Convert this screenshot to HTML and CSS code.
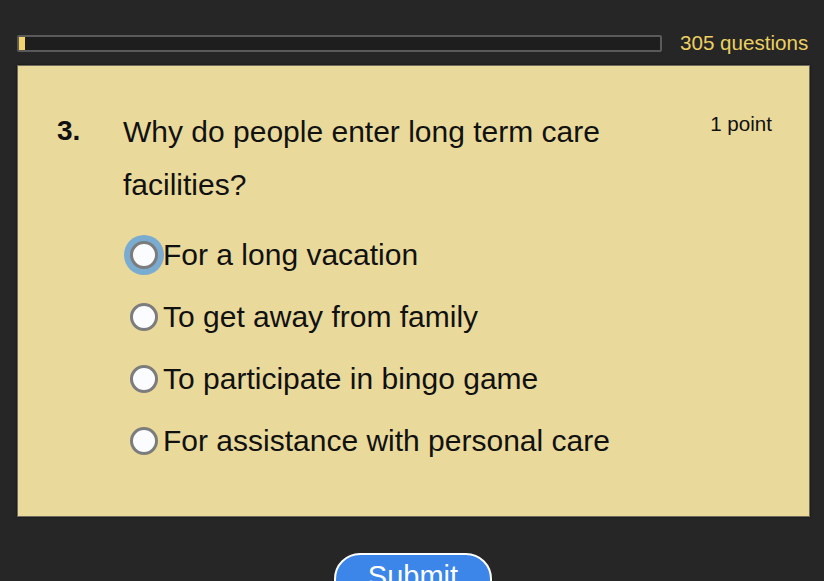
FILE: index.html
```html
<!DOCTYPE html>
<html>
<head>
    <title>Quiz</title>
    <link rel="stylesheet" href="styles.css">
</head>
<body>

    <div class="progress-row">
        <div class="progress-bar">
            <div class="progress-fill" style="width: 1%;"></div>
        </div>
        <span class="question-count">305 questions</span>
    </div>

    <div class="question-card">
        <div class="question-head">
            <div class="question-number">3.</div>
            <div class="question-text">Why do people enter long term care facilities?</div>
            <div class="question-points">1 point</div>
        </div>

        <div class="answers">
            <label class="answer">
                <input type="radio" name="q3" class="focused">
                <span>For a long vacation</span>
            </label>
            <label class="answer">
                <input type="radio" name="q3">
                <span>To get away from family</span>
            </label>
            <label class="answer">
                <input type="radio" name="q3">
                <span>To participate in bingo game</span>
            </label>
            <label class="answer">
                <input type="radio" name="q3">
                <span>For assistance with personal care</span>
            </label>
        </div>
    </div>

    <div class="submit-row">
        <button class="submit-btn">Submit</button>
    </div>

</body>
</html>
```

FILE: styles.css
```css
body {
    margin: 0;
    background-color: #262626;
    font-family: "Liberation Sans", Arial, sans-serif;
    overflow: hidden;
    height: 581px;
}

.progress-row {
    display: flex;
    align-items: center;
    padding: 32px 0 0 17px;
    height: 22px;
}

.progress-bar {
    flex-shrink: 0;
    width: 641px;
    height: 13px;
    border: 2px solid #5a5a5a;
    border-radius: 2px;
    background-color: #1e1e1e;
}

.progress-fill {
    min-width: 5px;
    height: 100%;
    background-color: #f2d46a;
}

.question-count {
    margin-left: 18px;
    white-space: nowrap;
    color: #ecd062;
    font-size: 20.6px;
}

.question-card {
    margin: 11px 14px 0 17px;
    height: 452px;
    box-sizing: border-box;
    background-color: #e9d99b;
    border: 1px solid #6e6a5c;
    box-shadow: 0 0 2px #111;
    padding: 43px 37px 0 39px;
}

.question-head {
    display: flex;
    align-items: flex-start;
}

.question-number {
    width: 66px;
    font-size: 28px;
    font-weight: bold;
    line-height: 44px;
    color: #111;
}

.question-text {
    width: 540px;
    font-size: 30px;
    line-height: 53px;
    margin-top: -4px;
    color: #111;
}

.question-points {
    margin-left: auto;
    font-size: 20.6px;
    line-height: 30px;
    color: #111;
}

.answers {
    display: flex;
    flex-direction: column;
    gap: 22px;
    margin-top: 24px;
    padding-left: 73px;
}

.answer {
    display: flex;
    align-items: center;
    height: 40px;
    font-size: 30px;
    color: #111;
}

.answer input {
    appearance: none;
    width: 28px;
    height: 28px;
    margin: 0 5px 0 0;
    border: 3px solid #7c7c7c;
    border-radius: 50%;
    background-color: #fbfcff;
    box-sizing: border-box;
}

.answer input.focused {
    box-shadow: 0 0 0 6px #7aabd0;
}

.submit-row {
    display: flex;
    justify-content: center;
    padding-top: 36px;
    padding-left: 2px;
}

.submit-btn {
    width: 158px;
    height: 52px;
    border: 2px solid #ffffff;
    border-radius: 26px;
    background-color: #3b86e8;
    color: #fff;
    font-family: "Liberation Sans", Arial, sans-serif;
    font-size: 29px;
    padding-bottom: 6px;
}
```
